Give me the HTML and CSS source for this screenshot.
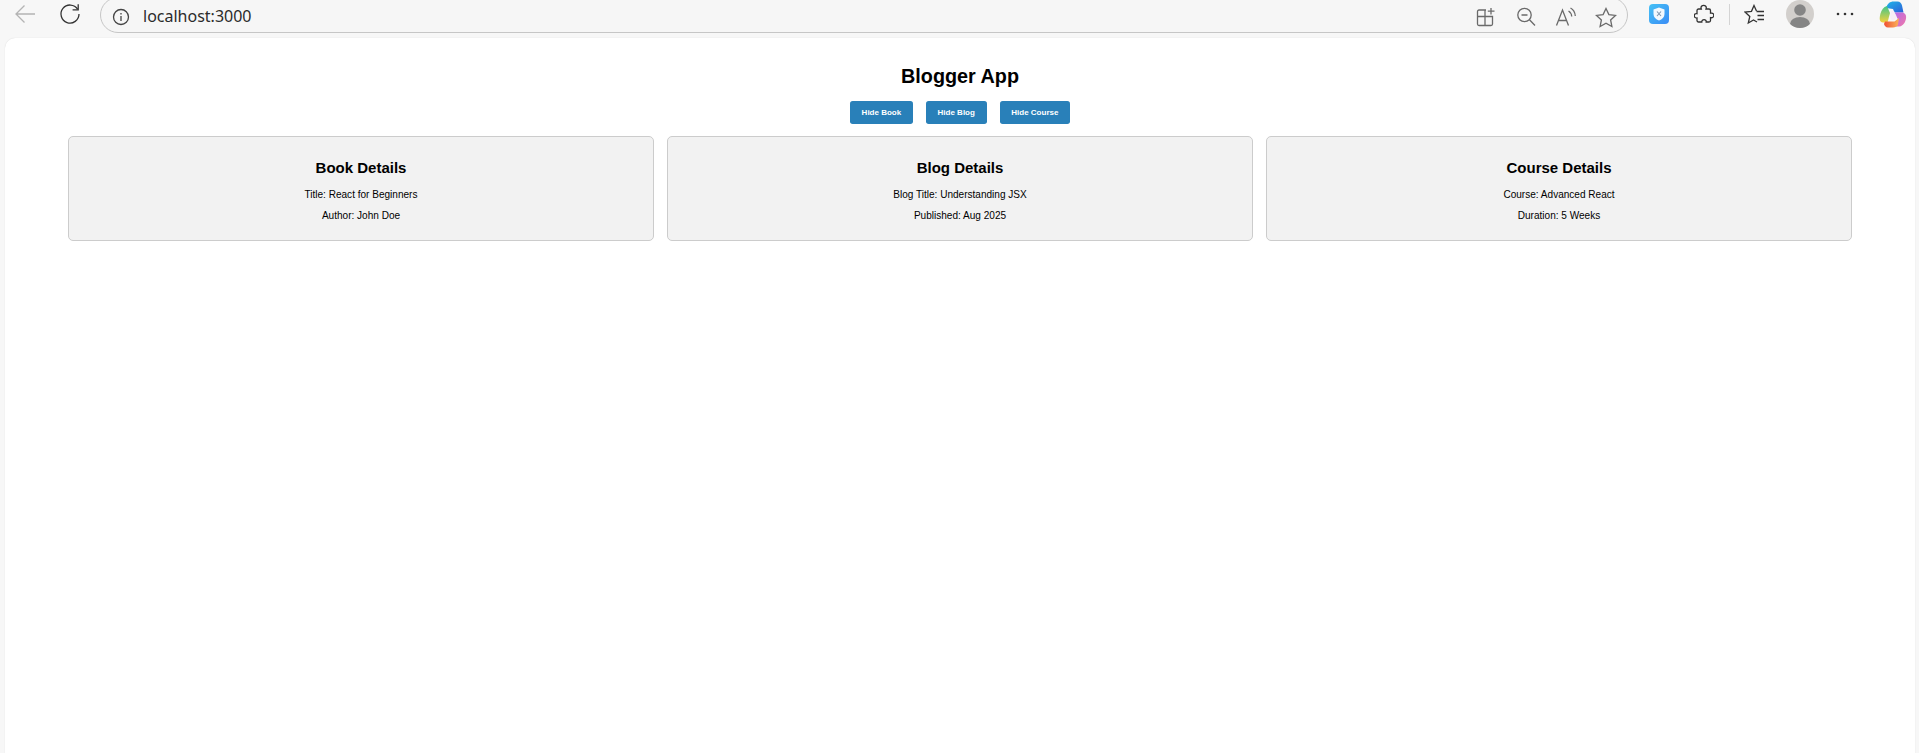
FILE: index.html
```html
<!DOCTYPE html>
<html lang="en">
<head>
    <meta charset="UTF-8">
    <title>Blogger App</title>
    <link rel="stylesheet" href="styles.css">
</head>
<body>

<header class="toolbar">
    <span class="tool tool-dim">
        <svg width="22" height="20" viewBox="0 0 22 20"><path d="M21 10H2M10.500 1.500 2 10l8.500 8.500"/></svg>
    </span>
    <span class="tool tool-reload">
        <svg width="22" height="22" viewBox="0 0 22 22"><path d="M18.600 6.200A9 9 0 1 0 20 11"/><path d="M19.200 1.200v5.600h-5.600"/></svg>
    </span>
    <div class="address">
        <svg class="info" width="18" height="18" viewBox="0 0 18 18"><circle cx="9" cy="9" r="7.500"/><path d="M9 8v5M9 5v1.400"/></svg>
        <span class="url">localhost:3000</span>
        <div class="address-tools">
            <span class="tool">
                <svg width="20" height="20" viewBox="0 0 20 20"><path d="M10 3H3a1.500 1.500 0 0 0-1.500 1.500V17A1.500 1.500 0 0 0 3 18.500h12a1.500 1.500 0 0 0 1.500-1.500V9.500H1.500M9 3.500v15M15 1v6.500M11.800 4.200h6.700"/></svg>
            </span>
            <span class="tool">
                <svg width="20" height="20" viewBox="0 0 20 20"><circle cx="8.500" cy="8" r="6.700"/><path d="M13.500 12.800 19 18.500M5.500 8h6"/></svg>
            </span>
            <span class="tool">
                <svg width="22" height="20" viewBox="0 0 22 20"><path d="M1.500 18.500 7.500 3l6 15.500M3.500 13.500h8M13.500 4c2 1.200 3 3 3.200 5.500M15.500 1c3 1.600 4.500 4.500 4.800 8"/></svg>
            </span>
            <span class="tool">
                <svg width="22" height="21" viewBox="0 0 22 21"><path d="m11 1.500 2.900 6.100 6.600.8-4.900 4.500 1.300 6.600-5.900-3.300-5.900 3.300 1.300-6.600L1.500 8.400l6.600-.8z"/></svg>
            </span>
        </div>
    </div>
    <div class="browser-tools">
        <span class="tool">
            <svg class="solid" width="20" height="20" viewBox="0 0 20 20">
                <defs>
                    <linearGradient id="shieldbg" x1="0" y1="0" x2="1" y2="1"><stop offset="0" stop-color="#45c1f5"/><stop offset="1" stop-color="#3a8cf5"/></linearGradient>
                </defs>
                <rect width="20" height="20" rx="4" fill="url(#shieldbg)"/>
                <path d="M10 3.500 15.500 5.500v4.500c0 3.200-2.300 5.300-5.500 6.500-3.200-1.200-5.500-3.300-5.500-6.500V5.500z" fill="#f2f8fe"/>
                <path d="M8 7.500l4 4.500M12 7.500l-4 4.500" stroke="#7d94ad" stroke-width="1.100" fill="none"/>
            </svg>
        </span>
        <span class="tool tool-dark">
            <svg width="20" height="21" viewBox="0 0 20 21"><path d="M7 3.500C7.300 .6 12 .6 12.300 3.500c0 .6-.1 1-.3 1.500h3c.8 0 1.500.7 1.500 1.500v2.700c2.900-.6 3.800 1.500 3 3.300-.6 1.200-1.700 1.500-3 1.100v2.900c0 .8-.7 1.500-1.500 1.500h-2.800c.5-3.200-4.700-3.200-4.400 0H4.500c-.8 0-1.500-.7-1.500-1.500v-2.500C-.6 14.500-.6 8.800 3 9.700V6.500C3 5.700 3.700 5 4.500 5h2.800c-.2-.5-.3-1-.3-1.500z"/></svg>
        </span>
        <span class="divider"></span>
        <span class="tool tool-dark">
            <svg width="22" height="21" viewBox="0 0 22 21"><path d="M12.500 7 10 1.500 7.500 7.300 1 8l4.800 4.500L4.300 19l5.200-3 3.500 2"/><path d="M12.500 7.500H20M13.500 11.500H20M13.500 15.500H20"/></svg>
        </span>
        <span class="tool">
            <span class="avatar">
                <svg class="solid" width="28" height="28" viewBox="0 0 28 28">
                    <circle cx="14" cy="10" r="5.800" fill="#858585"/>
                    <ellipse cx="14" cy="24" rx="10" ry="7" fill="#858585"/>
                </svg>
            </span>
        </span>
        <span class="tool">
            <svg class="solid dots" width="18" height="4" viewBox="0 0 18 4"><circle cx="2" cy="2" r="1.300"/><circle cx="9" cy="2" r="1.300"/><circle cx="16" cy="2" r="1.300"/></svg>
        </span>
        <span class="tool tool-copilot">
            <svg class="solid" width="28" height="27" viewBox="0 0 28 27">
                <defs>
                    <linearGradient id="cpblue" x1="0" y1="0" x2="1" y2="1"><stop offset="0" stop-color="#1fb6e8"/><stop offset="1" stop-color="#2d5fd8"/></linearGradient>
                    <linearGradient id="cpgreen" x1="0" y1="0" x2="0" y2="1"><stop offset="0" stop-color="#3fc48a"/><stop offset="1" stop-color="#f4d23c"/></linearGradient>
                    <linearGradient id="cppink" x1="0" y1="0" x2="1" y2="1"><stop offset="0" stop-color="#b56ae8"/><stop offset="1" stop-color="#f178a8"/></linearGradient>
                    <linearGradient id="cporange" x1="0" y1="0" x2="1" y2="0"><stop offset="0" stop-color="#ef4f34"/><stop offset="1" stop-color="#fbb45a"/></linearGradient>
                </defs>
                <path d="M7 7C8.500 2.500 11 .5 14.500 .5h4c2.500 0 4 2 4.500 4l1.500 7h-9L14 8z" fill="url(#cpblue)"/>
                <path d="M8 5C4.500 6 2.500 9 1.500 12.500 0 18 .5 21.500 4 21.500h4.500L11 12z" fill="url(#cpgreen)"/>
                <path d="M15.500 11.500h7c3.500 0 5 2.500 4.500 6-.6 4-3 7.500-6.500 8H17l2-7z" fill="url(#cppink)"/>
                <path d="M6 20.500h9.500L20 17l-1 6.500c-.8 2.200-2.500 3-5 3H9c-2.500 0-3.500-2-4-3.500z" fill="url(#cporange)"/>
                <path d="M12.500 10h2.500l2.500 5-1.500 4h-3.500l-1.500-4z" fill="#f7e9f5" opacity=".7"/>
            </svg>
        </span>
    </div>
</header>

<main class="page">
    <h1>Blogger App</h1>
    <div class="btn-row">
        <button class="btn">Hide Book</button>
        <button class="btn">Hide Blog</button>
        <button class="btn">Hide Course</button>
    </div>
    <div class="cards">
        <section class="card">
            <h2>Book Details</h2>
            <p>Title: React for Beginners</p>
            <p>Author: John Doe</p>
        </section>
        <section class="card">
            <h2>Blog Details</h2>
            <p>Blog Title: Understanding JSX</p>
            <p>Published: Aug 2025</p>
        </section>
        <section class="card">
            <h2>Course Details</h2>
            <p>Course: Advanced React</p>
            <p>Duration: 5 Weeks</p>
        </section>
    </div>
</main>

</body>
</html>
```
FILE: styles.css
```css
html, body {
    height: 100%;
}
body {
    margin: 0;
    background: #f7f7f7;
    font-family: "Liberation Sans", Arial, sans-serif;
    color: #000;
    display: flex;
    flex-direction: column;
    overflow: hidden;
}

/* browser chrome */
.toolbar {
    height: 38px;
    flex: none;
    display: flex;
    align-items: flex-start;
    padding-left: 5px;
    padding-right: 6px;
    overflow: hidden;
}
.tool {
    width: 40px;
    height: 28px;
    flex: none;
    display: flex;
    align-items: center;
    justify-content: center;
}
.tool svg {
    fill: none;
    stroke: #6a6a6a;
    stroke-width: 1.300;
}
.tool svg.solid {
    stroke: none;
}
.tool svg.dots {
    fill: #333;
}
.tool-dim svg {
    stroke: #b4b4b4;
}
.tool-reload {
    margin-left: 5px;
}
.tool-reload svg,
.tool-dark svg {
    stroke: #333;
}
.address {
    flex: 1;
    height: 36px;
    margin: -3px 0 0 10px;
    padding-left: 11px;
    box-sizing: border-box;
    display: flex;
    align-items: center;
    border: 1px solid #c6c6c6;
    border-radius: 20px;
    background: #f6f6f6;
}
.info {
    fill: none;
    stroke: #444;
    stroke-width: 1.300;
    margin-top: 3px;
}
.url {
    margin: 2px 0 0 13px;
    font-family: "Noto Sans", sans-serif;
    font-size: 16px;
    color: #2b2b2b;
}
.address-tools {
    margin-left: auto;
    margin-right: 1px;
    margin-top: 4px;
    display: flex;
}
.browser-tools {
    margin-left: 11px;
    display: flex;
    gap: 5px;
}
.divider {
    width: 1px;
    height: 21px;
    margin: 4px 0 0;
    background: #d4d4d4;
}
.avatar {
    width: 28px;
    height: 28px;
    border-radius: 50%;
    overflow: hidden;
    background: #d2cfcc;
}
.avatar svg {
    display: block;
}
.tool-copilot {
    margin-left: 3px;
}

/* the app */
.page {
    flex: 1;
    margin: 0 4px 0 5px;
    padding: 0 63px;
    background: #fff;
    border-radius: 10px 10px 0 0;
    box-shadow: 0 0 1px #cfcfcf;
    text-align: center;
}
h1 {
    margin: 26px 0 0;
    font-size: 19.800px;
    line-height: 25px;
}
.btn-row {
    margin-top: 12px;
    display: flex;
    justify-content: center;
    gap: 13px;
}
.btn {
    height: 23px;
    padding: 0 11.700px;
    border: 0;
    border-radius: 2.700px;
    background: #2980b9;
    color: #fff;
    font-family: inherit;
    font-size: 8px;
    font-weight: bold;
}
.cards {
    margin-top: 12px;
    display: flex;
    gap: 13px;
}
.card {
    flex: 1;
    height: 105px;
    box-sizing: border-box;
    padding-top: 13px;
    background: #f2f2f2;
    border: 1px solid #ccc;
    border-radius: 5px;
}
h2 {
    margin: 9px 0 12px;
    font-size: 15px;
    line-height: 18px;
}
p {
    margin: 0 0 10px;
    font-size: 10.050px;
    line-height: 11px;
}
```
